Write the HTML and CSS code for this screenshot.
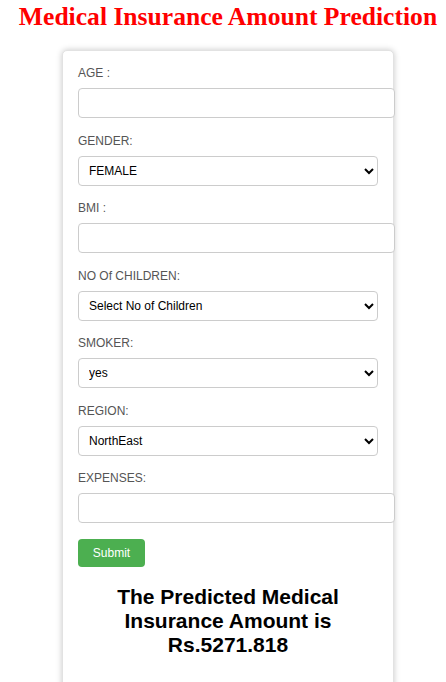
FILE: index.html
```html
<!DOCTYPE html>
<html>
<head>
<meta charset="utf-8">
<link rel="stylesheet" href="styles.css">
</head>
<body>
<div class="page">
  <h1 class="title">Medical Insurance Amount Prediction</h1>
  <form class="card">
    <label class="lbl">AGE :</label>
    <input class="field" type="text">
    <label class="lbl">GENDER:</label>
    <select class="choice"><option>FEMALE</option><option>MALE</option></select>
    <label class="lbl">BMI :</label>
    <input class="field" type="text">
    <label class="lbl">NO Of CHILDREN:</label>
    <select class="choice"><option>Select No of Children</option></select>
    <label class="lbl">SMOKER:</label>
    <select class="choice"><option>yes</option><option>no</option></select>
    <label class="lbl">REGION:</label>
    <select class="choice"><option>NorthEast</option></select>
    <label class="lbl">EXPENSES:</label>
    <input class="field" type="text">
    <button class="submit" type="button">Submit</button>
    <h2 class="result">The Predicted Medical Insurance Amount is Rs.5271.818</h2>
  </form>
</div>
</body>
</html>
```
FILE: styles.css
```css
html, body {
  margin: 0;
  padding: 0;
  background: #fff;
}
.page {
  padding-left: 10px;
  display: flex;
  flex-direction: column;
  align-items: center;
}
.title {
  margin: 0;
  font-family: "Liberation Serif", "Times New Roman", serif;
  font-weight: bold;
  font-size: 25.6px;
  color: #ff0000;
  text-align: center;
  line-height: 34px;
  white-space: nowrap;
}
.card {
  margin-top: 16px;
  width: 300px;
  padding: 15px 15px 40px;
  border: 1px solid #e2e2e2;
  border-radius: 5px;
  box-shadow: 0 0 6px rgba(0,0,0,0.22);
  background: #fff;
  display: flex;
  flex-direction: column;
  align-items: flex-start;
  font-family: "Liberation Sans", Arial, sans-serif;
}
.lbl {
  display: block;
  font-size: 12px;
  line-height: 14px;
  color: #555;
  margin-bottom: 8px;
}
.field, .choice {
  height: 30px;
  border: 1px solid #ccc;
  border-radius: 4px;
  margin: 0 0 15.5px;
  font-family: "Liberation Sans", Arial, sans-serif;
  font-size: 12px;
  background: #fff;
  color: #000;
  box-sizing: border-box;
}
.field {
  width: 317px;
  padding: 0 8px;
}
.choice {
  width: 300px;
  padding: 0 6px;
}
.submit {
  background: #4caf50;
  color: #fff;
  border: none;
  border-radius: 4px;
  width: 67px;
  height: 28px;
  font-family: "Liberation Sans", Arial, sans-serif;
  font-size: 12px;
  padding: 0;
  margin-top: 0.5px;
}
.result {
  align-self: stretch;
  margin: 18px 0 0;
  font-size: 21px;
  line-height: 24px;
  font-weight: bold;
  text-align: center;
  color: #000;
  padding: 0 10px;
}
```
